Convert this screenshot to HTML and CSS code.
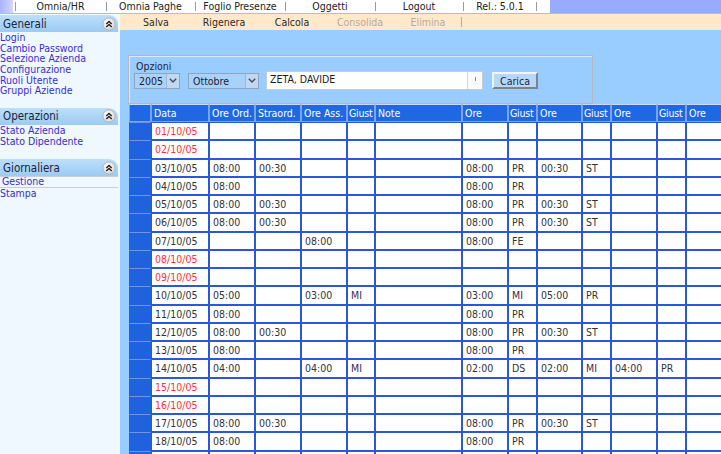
FILE: index.html
```html
<!DOCTYPE html>
<html lang="it">
<head>
<meta charset="utf-8">
<title>Foglio Presenze</title>
<link rel="stylesheet" href="styles.css">
</head>
<body>
<header class="topbar">
  <div class="topbar-corner"></div>
  <nav class="topmenu">
    <span class="tm w91">Omnia/HR</span>
    <span class="tm w89">Omnia Paghe</span>
    <span class="tm w90">Foglio Presenze</span>
    <span class="tm w90">Oggetti</span>
    <span class="tm w88">Logout</span>
    <span class="tm w74 last">Rel.: 5.0.1</span>
  </nav>
  <div class="topbar-fill"></div>
</header>
<div class="layout">
  <aside class="sidebar">
    <section class="side-sec sec1">
      <div class="side-head"><span>Generali</span>
        <svg class="collapse" width="14" height="14" viewBox="0 0 14 14"><defs><radialGradient id="g1" cx="40%" cy="35%" r="70%"><stop offset="0" stop-color="#ffffff"/><stop offset="1" stop-color="#d4d4d4"/></radialGradient></defs><circle cx="7" cy="7" r="6.2" fill="url(#g1)" stroke="#a8a8a8" stroke-width="0.8"/><polyline points="4.3,7 7,4.4 9.7,7" fill="none" stroke="#222" stroke-width="1.4"/><polyline points="4.3,10 7,7.4 9.7,10" fill="none" stroke="#222" stroke-width="1.4"/></svg>
      </div>
      <div class="side-links">
        <a href="#">Login</a>
        <a href="#">Cambio Password</a>
        <a href="#">Selezione Azienda</a>
        <a href="#">Configurazione</a>
        <a href="#">Ruoli Utente</a>
        <a href="#">Gruppi Aziende</a>
      </div>
    </section>
    <section class="side-sec sec2">
      <div class="side-head"><span>Operazioni</span>
        <svg class="collapse" width="14" height="14" viewBox="0 0 14 14"><defs><radialGradient id="g2" cx="40%" cy="35%" r="70%"><stop offset="0" stop-color="#ffffff"/><stop offset="1" stop-color="#d4d4d4"/></radialGradient></defs><circle cx="7" cy="7" r="6.2" fill="url(#g2)" stroke="#a8a8a8" stroke-width="0.8"/><polyline points="4.3,7 7,4.4 9.7,7" fill="none" stroke="#222" stroke-width="1.4"/><polyline points="4.3,10 7,7.4 9.7,10" fill="none" stroke="#222" stroke-width="1.4"/></svg>
      </div>
      <div class="side-links">
        <a href="#">Stato Azienda</a>
        <a href="#">Stato Dipendente</a>
      </div>
    </section>
    <section class="side-sec sec3">
      <div class="side-head"><span>Giornaliera</span>
        <svg class="collapse" width="14" height="14" viewBox="0 0 14 14"><defs><radialGradient id="g3" cx="40%" cy="35%" r="70%"><stop offset="0" stop-color="#ffffff"/><stop offset="1" stop-color="#d4d4d4"/></radialGradient></defs><circle cx="7" cy="7" r="6.2" fill="url(#g3)" stroke="#a8a8a8" stroke-width="0.8"/><polyline points="4.3,7 7,4.4 9.7,7" fill="none" stroke="#222" stroke-width="1.4"/><polyline points="4.3,10 7,7.4 9.7,10" fill="none" stroke="#222" stroke-width="1.4"/></svg>
      </div>
      <div class="side-links">
        <a href="#" class="current">Gestione</a>
        <a href="#">Stampa</a>
      </div>
    </section>
  </aside>
  <main class="main">
    <div class="toolbar">
      <span class="tb">Salva</span>
      <span class="tb">Rigenera</span>
      <span class="tb">Calcola</span>
      <span class="tb off">Consolida</span>
      <span class="tb off last">Elimina</span>
    </div>
    <div class="content">
      <fieldset class="options">
        <div class="opt-label">Opzioni</div>
        <div class="opt-row">
          <div class="select sel-year"><span class="sel-val">2005</span><span class="sel-arrow"><svg width="8" height="5" viewBox="0 0 8 5"><polyline points="0.8,0.8 4,4 7.2,0.8" fill="none" stroke="#3c4c6c" stroke-width="1.4"/></svg></span></div>
          <div class="select sel-month"><span class="sel-val">Ottobre</span><span class="sel-arrow"><svg width="8" height="5" viewBox="0 0 8 5"><polyline points="0.8,0.8 4,4 7.2,0.8" fill="none" stroke="#3c4c6c" stroke-width="1.4"/></svg></span></div>
          <div class="namebox"><span class="name-val">ZETA, DAVIDE</span><span class="name-btn"><span class="tick"></span></span></div>
          <button class="btn" type="button">Carica</button>
        </div>
      </fieldset>
      <table class="grid">
        <thead>
          <tr>
            <th class="c-sel"></th><th class="c-data">Data</th><th class="c46">Ore Ord.</th><th class="c46">Straord.</th><th class="c46">Ore Ass.</th><th class="c28">Giust</th><th class="c87">Note</th><th class="c46">Ore</th><th class="c29">Giust</th><th class="c45">Ore</th><th class="c29">Giust</th><th class="c46">Ore</th><th class="c29">Giust</th><th class="c46">Ore</th>
          </tr>
        </thead>
        <tbody>
          <tr><td class="sel"></td><td class="hol">01/10/05</td><td></td><td></td><td></td><td></td><td></td><td></td><td></td><td></td><td></td><td></td><td></td><td></td></tr>
          <tr><td class="sel"></td><td class="hol">02/10/05</td><td></td><td></td><td></td><td></td><td></td><td></td><td></td><td></td><td></td><td></td><td></td><td></td></tr>
          <tr><td class="sel"></td><td>03/10/05</td><td>08:00</td><td>00:30</td><td></td><td></td><td></td><td>08:00</td><td>PR</td><td>00:30</td><td>ST</td><td></td><td></td><td></td></tr>
          <tr><td class="sel"></td><td>04/10/05</td><td>08:00</td><td></td><td></td><td></td><td></td><td>08:00</td><td>PR</td><td></td><td></td><td></td><td></td><td></td></tr>
          <tr><td class="sel"></td><td>05/10/05</td><td>08:00</td><td>00:30</td><td></td><td></td><td></td><td>08:00</td><td>PR</td><td>00:30</td><td>ST</td><td></td><td></td><td></td></tr>
          <tr><td class="sel"></td><td>06/10/05</td><td>08:00</td><td>00:30</td><td></td><td></td><td></td><td>08:00</td><td>PR</td><td>00:30</td><td>ST</td><td></td><td></td><td></td></tr>
          <tr><td class="sel"></td><td>07/10/05</td><td></td><td></td><td>08:00</td><td></td><td></td><td>08:00</td><td>FE</td><td></td><td></td><td></td><td></td><td></td></tr>
          <tr><td class="sel"></td><td class="hol">08/10/05</td><td></td><td></td><td></td><td></td><td></td><td></td><td></td><td></td><td></td><td></td><td></td><td></td></tr>
          <tr><td class="sel"></td><td class="hol">09/10/05</td><td></td><td></td><td></td><td></td><td></td><td></td><td></td><td></td><td></td><td></td><td></td><td></td></tr>
          <tr><td class="sel"></td><td>10/10/05</td><td>05:00</td><td></td><td>03:00</td><td class="mi">MI</td><td></td><td>03:00</td><td class="mi">MI</td><td>05:00</td><td>PR</td><td></td><td></td><td></td></tr>
          <tr><td class="sel"></td><td>11/10/05</td><td>08:00</td><td></td><td></td><td></td><td></td><td>08:00</td><td>PR</td><td></td><td></td><td></td><td></td><td></td></tr>
          <tr><td class="sel"></td><td>12/10/05</td><td>08:00</td><td>00:30</td><td></td><td></td><td></td><td>08:00</td><td>PR</td><td>00:30</td><td>ST</td><td></td><td></td><td></td></tr>
          <tr><td class="sel"></td><td>13/10/05</td><td>08:00</td><td></td><td></td><td></td><td></td><td>08:00</td><td>PR</td><td></td><td></td><td></td><td></td><td></td></tr>
          <tr><td class="sel"></td><td>14/10/05</td><td>04:00</td><td></td><td>04:00</td><td class="mi">MI</td><td></td><td>02:00</td><td>DS</td><td>02:00</td><td class="mi">MI</td><td>04:00</td><td>PR</td><td></td></tr>
          <tr><td class="sel"></td><td class="hol">15/10/05</td><td></td><td></td><td></td><td></td><td></td><td></td><td></td><td></td><td></td><td></td><td></td><td></td></tr>
          <tr><td class="sel"></td><td class="hol">16/10/05</td><td></td><td></td><td></td><td></td><td></td><td></td><td></td><td></td><td></td><td></td><td></td><td></td></tr>
          <tr><td class="sel"></td><td>17/10/05</td><td>08:00</td><td>00:30</td><td></td><td></td><td></td><td>08:00</td><td>PR</td><td>00:30</td><td>ST</td><td></td><td></td><td></td></tr>
          <tr><td class="sel"></td><td>18/10/05</td><td>08:00</td><td></td><td></td><td></td><td></td><td>08:00</td><td>PR</td><td></td><td></td><td></td><td></td><td></td></tr>
          <tr><td class="sel"></td><td></td><td></td><td></td><td></td><td></td><td></td><td></td><td></td><td></td><td></td><td></td><td></td><td></td></tr>
        </tbody>
      </table>
    </div>
  </main>
</div>
</body>
</html>
```
FILE: styles.css
```css
* { box-sizing: border-box; }
html, body { margin: 0; padding: 0; }
body {
  width: 721px;
  height: 454px;
  overflow: hidden;
  font-family: "DejaVu Sans Condensed", "DejaVu Sans", Tahoma, sans-serif;
  font-size: 10.5px;
  color: #333;
  background: #99ccff;
}

/* top bar */
.topbar {
  display: flex;
  height: 14px;
  border-bottom: 1px solid #a7bcef;
  background: #9aaaff;
}
.topbar-corner {
  width: 13px;
  background: linear-gradient(90deg, #a9b3ff, #d3d8ff);
}
.topmenu {
  display: flex;
  width: 537px;
  padding-left: 2px;
  background: #fff;
}
.tm {
  height: 13px;
  line-height: 13px;
  text-align: center;
  color: #222;
  background: linear-gradient(#9a9a9a, #9a9a9a) left 2px / 1px 9px no-repeat;
}
.tm.last {
  background:
    linear-gradient(#9a9a9a, #9a9a9a) left 2px / 1px 9px no-repeat,
    linear-gradient(#9a9a9a, #9a9a9a) right 2px / 1px 9px no-repeat;
}
.w91 { width: 91px; }
.w89 { width: 89px; }
.w90 { width: 90px; }
.w88 { width: 88px; }
.w74 { width: 74px; }
.topbar-fill { flex: 1; }

/* layout */
.layout {
  display: flex;
  height: 440px;
}

/* sidebar */
.sidebar {
  width: 120px;
  flex: none;
  background: #eff7ff;
  padding-top: 1px;
}
.side-sec.sec1 { margin-bottom: 12px; }
.side-sec.sec2 { margin-bottom: 13px; }
.side-head {
  height: 17px;
  margin-right: 2px;
  padding: 0 2px 0 3px;
  display: flex;
  align-items: center;
  justify-content: space-between;
  background: linear-gradient(#bcdffa, #9ccbf1);
  border-top-right-radius: 9px;
  font-size: 11.5px;
  color: #1a2440;
}
.collapse { display: block; }
.side-links {
  display: flex;
  flex-direction: column;
}
.side-links a {
  line-height: 10.65px;
  color: #3a2ecb;
  text-decoration: none;
}
.side-links a.current {
  border-top: 1px solid #c9cfd8;
  border-bottom: 1px solid #c9cfd8;
  padding-left: 2px;
  margin-right: 2px;
  line-height: 9.5px;
}

/* main */
.main {
  flex: 1;
  display: flex;
  flex-direction: column;
  min-width: 0;
}
.toolbar {
  height: 16px;
  flex: none;
  display: flex;
  padding-left: 2px;
  background: #ffe9c9;
}
.tb {
  width: 68px;
  line-height: 16px;
  text-align: center;
  color: #2a2a2a;
}
.tb.off { color: #b3aba0; }
.tb.last {
  background: linear-gradient(#b0aaa0, #b0aaa0) right 3px / 1px 10px no-repeat;
}

.content {
  flex: 1;
  padding: 25px 0 0 8px;
  background: #99ccff;
  overflow: hidden;
}

/* options fieldset */
.options {
  margin: 0;
  width: 465px;
  height: 49px;
  padding: 2px 0 0 5px;
  border: 1px solid #b2b8c2;
  box-shadow: inset 1px 1px 0 #d9e9fb;
  min-inline-size: 0;
}
.opt-label {
  line-height: 11px;
  color: #1d2540;
  padding: 3px 0 0 2px;
}
.opt-row {
  display: flex;
  align-items: center;
  height: 19px;
  margin-top: -1px;
}
.select {
  display: flex;
  height: 16px;
  border: 1px solid #8ea4bf;
  background: #a8d2f9;
}
.sel-year { width: 46px; margin-right: 8px; }
.sel-month { width: 71px; margin-right: 7px; }
.sel-val {
  flex: 1;
  padding-left: 4px;
  line-height: 14px;
  color: #1c2232;
}
.sel-arrow {
  width: 13px;
  display: flex;
  align-items: center;
  justify-content: center;
  background: #c2d8ef;
  border-left: 1px solid #9fb7d1;
}
.namebox {
  display: flex;
  width: 217px;
  height: 19px;
  margin-right: 9px;
  background: #fff;
  border: 1px solid #c6ccd4;
}
.name-val {
  flex: 1;
  padding: 1px 0 0 3px;
  line-height: 12px;
  color: #1c1c1c;
}
.name-btn {
  width: 15px;
  display: flex;
  justify-content: center;
  padding-top: 5px;
  border-left: 1px solid #d4d8dc;
  background: #fafafa;
}
.tick {
  width: 1px;
  height: 4px;
  background: #888;
}
.btn {
  width: 46px;
  height: 17px;
  padding: 0;
  font: inherit;
  color: #1b1f4a;
  background: #b7d7f9;
  border: 2px solid;
  border-color: #eef4fb #7f8388 #7f8388 #eef4fb;
}

/* grid */
.grid {
  margin-left: 1px;
  table-layout: fixed;
  width: 603px;
  border-collapse: separate;
  border-spacing: 0;
  background: #fff;
}
.grid th, .grid td {
  white-space: nowrap;
  text-align: left;
  font-weight: normal;
}
.grid th {
  height: 18px;
  padding: 0 0 0 1px;
  overflow: hidden;
  letter-spacing: -0.2px;
  color: #fff;
  background: #1f68e1;
  border: 1px solid #7ea3ee;
  border-top-color: #c9dbf8;
}
.grid th.c-data, .grid th.c46, .grid th.c45, .grid th.c87 {
  padding-left: 2px;
  letter-spacing: 0;
}
.grid td {
  height: 18.25px;
  padding: 0 0 0 3px;
  overflow: hidden;
  color: #333;
  border: 1px solid #2c57d8;
}
.grid td.sel {
  background: #1e62de;
  border-color: #6f93e8 #1e62de #1e62de #1e62de;
}
.grid td.hol { color: #ff3030; }
.grid td.mi { color: #4a1f4c; }
.c-sel { width: 22px; }
.c-data { width: 58px; }
.c46 { width: 46px; }
.c45 { width: 45px; }
.c28 { width: 28px; }
.c29 { width: 29px; }
.c87 { width: 87px; }
```
